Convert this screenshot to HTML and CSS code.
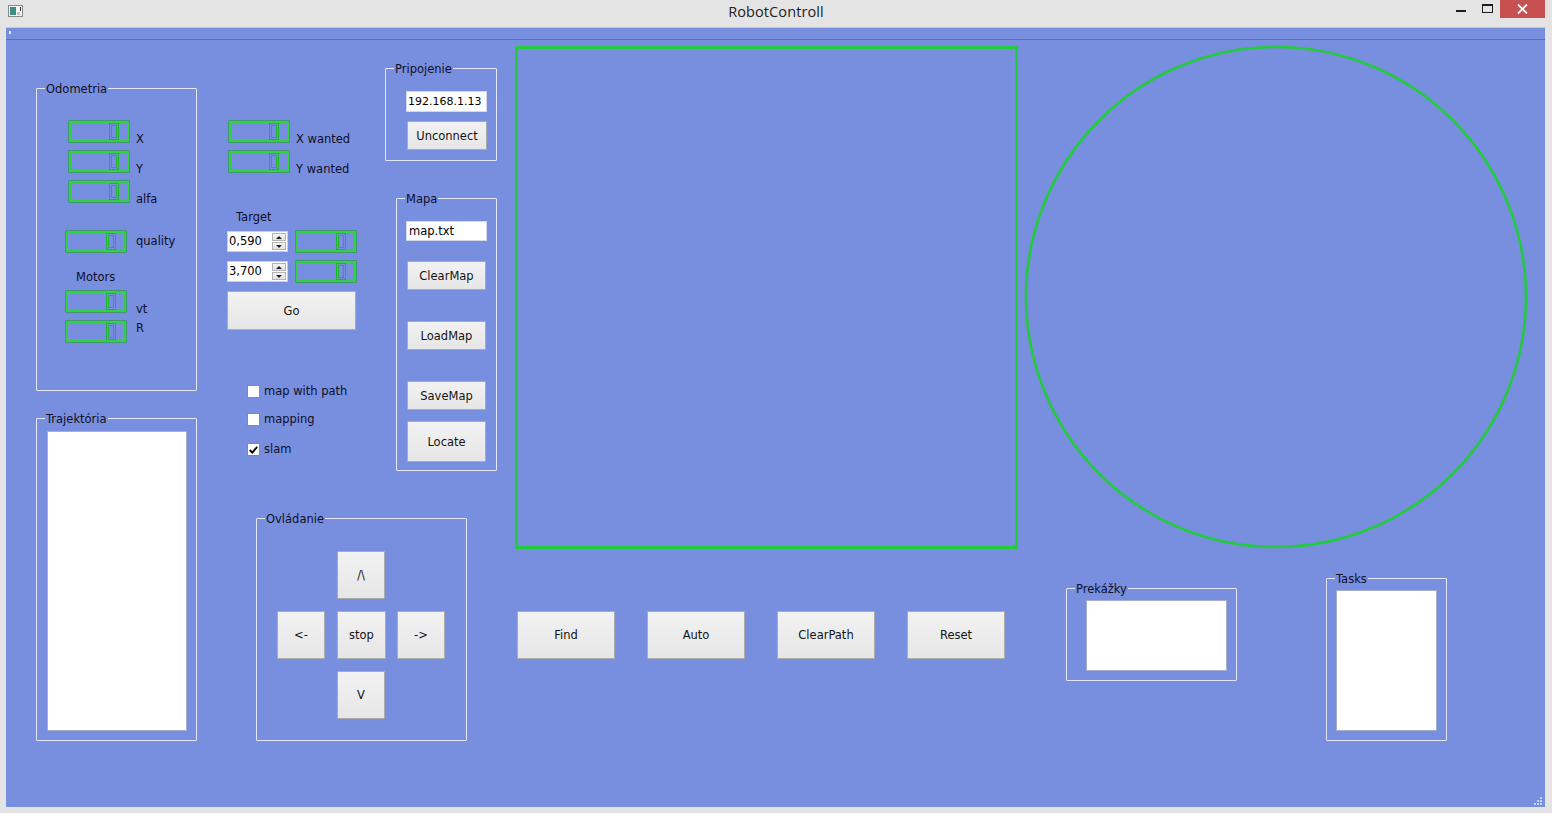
FILE: index.html
```html
<!DOCTYPE html>
<html lang="sk">
<head>
<meta charset="utf-8">
<title>RobotControll</title>
<link rel="stylesheet" href="styles.css">
</head>
<body>
<div class="window">
  <header class="titlebar">
    <svg class="app-icon" width="15" height="12" viewBox="0 0 15 12">
      <rect x="0.5" y="0.5" width="14" height="11" fill="#f4f4f4" stroke="#8a8a8a"/>
      <rect x="2" y="2" width="6" height="8" fill="#3d8f86"/>
      <rect x="9" y="7" width="3" height="3" fill="#c9c0b0"/>
      <rect x="12" y="2" width="1" height="4" fill="#333"/>
    </svg>
    <div class="title">RobotControll</div>
    <div class="controls">
      <span class="ctl-min"></span>
      <span class="ctl-max"></span>
      <span class="ctl-close">
        <svg width="11" height="10" viewBox="0 0 11 10"><path d="M1 0.5 L10 9.5 M10 0.5 L1 9.5" stroke="#fff" stroke-width="1.8"/></svg>
      </span>
    </div>
  </header>

  <main class="client">
    <div class="toolbar"><span class="handle"></span></div>

    <div class="form">
      <!-- Odometria -->
      <section class="group g-odo">
        <span class="gtitle">Odometria</span>
        <div class="row r-x"><div class="lcd"><svg class="digit" width="10" height="17" viewBox="0 0 10 17"><rect x="0.5" y="0.5" width="9" height="16"/><rect x="2.5" y="2.5" width="5" height="12"/></svg></div><span class="lbl lbl-low">X</span></div>
        <div class="row r-y"><div class="lcd"><svg class="digit" width="10" height="17" viewBox="0 0 10 17"><rect x="0.5" y="0.5" width="9" height="16"/><rect x="2.5" y="2.5" width="5" height="12"/></svg></div><span class="lbl lbl-low">Y</span></div>
        <div class="row r-y"><div class="lcd"><svg class="digit" width="10" height="17" viewBox="0 0 10 17"><rect x="0.5" y="0.5" width="9" height="16"/><rect x="2.5" y="2.5" width="5" height="12"/></svg></div><span class="lbl lbl-low">alfa</span></div>
        <div class="row r-q"><div class="lcd"><svg class="digit" width="10" height="17" viewBox="0 0 10 17"><rect x="0.5" y="0.5" width="9" height="16"/><rect x="2.5" y="2.5" width="5" height="12"/></svg></div><span class="lbl lbl-mid lbl-w">quality</span></div>
        <span class="lbl motors">Motors</span>
        <div class="row r-vt"><div class="lcd"><svg class="digit" width="10" height="17" viewBox="0 0 10 17"><rect x="0.5" y="0.5" width="9" height="16"/><rect x="2.5" y="2.5" width="5" height="12"/></svg></div><span class="lbl lbl-low lbl-w">vt</span></div>
        <div class="row r-r"><div class="lcd"><svg class="digit" width="10" height="17" viewBox="0 0 10 17"><rect x="0.5" y="0.5" width="9" height="16"/><rect x="2.5" y="2.5" width="5" height="12"/></svg></div><span class="lbl lbl-top lbl-w">R</span></div>
      </section>

      <!-- Trajektoria -->
      <section class="group g-traj">
        <span class="gtitle">Trajektória</span>
        <div class="listbox lb-traj"></div>
      </section>

      <!-- middle column -->
      <div class="midcol">
        <div class="row r-w"><div class="lcd"><svg class="digit" width="10" height="17" viewBox="0 0 10 17"><rect x="0.5" y="0.5" width="9" height="16"/><rect x="2.5" y="2.5" width="5" height="12"/></svg></div><span class="lbl lbl-low">X wanted</span></div>
        <div class="row r-w r-y"><div class="lcd"><svg class="digit" width="10" height="17" viewBox="0 0 10 17"><rect x="0.5" y="0.5" width="9" height="16"/><rect x="2.5" y="2.5" width="5" height="12"/></svg></div><span class="lbl lbl-low">Y wanted</span></div>
        <span class="lbl target">Target</span>
        <div class="row r-spin">
          <div class="spin"><span class="spin-val">0,590</span><span class="spin-btns"><span class="sb up"></span><span class="sb down"></span></span></div>
          <div class="lcd lcd-spin"><svg class="digit" width="10" height="17" viewBox="0 0 10 17"><rect x="0.5" y="0.5" width="9" height="16"/><rect x="2.5" y="2.5" width="5" height="12"/></svg></div>
        </div>
        <div class="row r-spin r-spin2">
          <div class="spin"><span class="spin-val">3,700</span><span class="spin-btns"><span class="sb up"></span><span class="sb down"></span></span></div>
          <div class="lcd lcd-spin"><svg class="digit" width="10" height="17" viewBox="0 0 10 17"><rect x="0.5" y="0.5" width="9" height="16"/><rect x="2.5" y="2.5" width="5" height="12"/></svg></div>
        </div>
        <button class="btn btn-go">Go</button>
        <div class="checks">
          <label class="chk"><span class="box"></span>map with path</label>
          <label class="chk chk2"><span class="box"></span>mapping</label>
          <label class="chk chk3"><span class="box checked"><svg width="9" height="8" viewBox="0 0 9 8"><path d="M0.8 4 L3.3 6.6 L8.2 0.9" fill="none" stroke="#000" stroke-width="1.9"/></svg></span>slam</label>
        </div>
      </div>

      <!-- Pripojenie -->
      <section class="group g-conn">
        <span class="gtitle">Pripojenie</span>
        <div class="edit edit-ip">192.168.1.13</div>
        <button class="btn btn-unconnect">Unconnect</button>
      </section>

      <!-- Mapa -->
      <section class="group g-map">
        <span class="gtitle">Mapa</span>
        <div class="edit edit-map">map.txt</div>
        <button class="btn btn-map b-clear">ClearMap</button>
        <button class="btn btn-map b-load">LoadMap</button>
        <button class="btn btn-map b-save">SaveMap</button>
        <button class="btn btn-map b-locate">Locate</button>
      </section>

      <!-- map canvas -->
      <div class="mapframe"></div>
      <svg class="radar" width="506" height="506" viewBox="0 0 506 506">
        <circle cx="253" cy="253" r="250" fill="none" stroke="#22cc3c" stroke-width="2.6"/>
      </svg>

      <!-- Ovladanie -->
      <section class="group g-ctrl">
        <span class="gtitle">Ovládanie</span>
        <div class="pad">
          <button class="btn pbtn p-up">/\</button>
          <button class="btn pbtn p-left">&lt;-</button>
          <button class="btn pbtn p-stop">stop</button>
          <button class="btn pbtn p-right">-&gt;</button>
          <button class="btn pbtn p-down">V</button>
        </div>
      </section>

      <!-- action buttons -->
      <div class="actions">
        <button class="btn abtn">Find</button>
        <button class="btn abtn">Auto</button>
        <button class="btn abtn">ClearPath</button>
        <button class="btn abtn">Reset</button>
      </div>

      <!-- Prekazky -->
      <section class="group g-obst">
        <span class="gtitle">Prekážky</span>
        <div class="listbox lb-obst"></div>
      </section>

      <!-- Tasks -->
      <section class="group g-tasks">
        <span class="gtitle">Tasks</span>
        <div class="listbox lb-tasks"></div>
      </section>
    </div>

    <svg class="grip" width="10" height="10" viewBox="0 0 10 10">
      <rect x="7" y="1" width="2" height="2" fill="#c9d0f0"/>
      <rect x="4" y="4" width="2" height="2" fill="#c9d0f0"/>
      <rect x="7" y="4" width="2" height="2" fill="#c9d0f0"/>
      <rect x="1" y="7" width="2" height="2" fill="#c9d0f0"/>
      <rect x="4" y="7" width="2" height="2" fill="#c9d0f0"/>
      <rect x="7" y="7" width="2" height="2" fill="#c9d0f0"/>
    </svg>
  </main>
</div>
</body>
</html>
```

FILE: styles.css
```css
* { box-sizing: border-box; }

html, body {
  margin: 0;
  padding: 0;
  background: #e4e4e4;
}

body {
  font-family: "DejaVu Sans", "Liberation Sans", sans-serif;
  font-size: 11.5px;
  color: #0e1028;
}

.window {
  width: 1552px;
  height: 813px;
  display: flex;
  flex-direction: column;
  background: #e4e4e4;
  overflow: hidden;
}

/* ---------- title bar ---------- */
.titlebar {
  height: 27px;
  flex: none;
  display: grid;
  grid-template-columns: 1fr auto 1fr;
  align-items: start;
}

.app-icon {
  margin: 5px 0 0 8px;
  display: block;
}

.title {
  font-family: "Open Sans", "Noto Sans", sans-serif;
  font-size: 14.5px;
  line-height: 24px;
  color: #222;
  letter-spacing: 0.1px;
}

.controls {
  justify-self: end;
  display: flex;
  align-items: flex-start;
  margin-right: 7px;
}

.ctl-min {
  width: 10px;
  height: 2px;
  margin-top: 10px;
  margin-right: 16px;
  background: #1c1c1c;
}

.ctl-max {
  width: 11px;
  height: 9px;
  margin-top: 4px;
  margin-right: 7px;
  border: 1px solid #1c1c1c;
  border-top-width: 2px;
}

.ctl-close {
  width: 45px;
  height: 18px;
  background: #c75050;
  display: flex;
  align-items: center;
  justify-content: center;
}

.ctl-close svg { display: block; }

/* ---------- client area ---------- */
.client {
  position: relative;
  flex: none;
  height: 780px;
  margin: 0 7px 0 6px;
  border-top: 1px solid #c5c9d6;
  background: #788ede;
  display: flex;
  flex-direction: column;
}

.toolbar {
  height: 12px;
  flex: none;
  border-bottom: 1px solid #5a6cc4;
  padding: 3px 0 0 3px;
}

.handle {
  display: block;
  width: 2px;
  height: 3px;
  background: #e8ecff;
}

.form {
  position: relative;
  flex: 1;
}

.grip {
  position: absolute;
  right: 2px;
  bottom: 1px;
}

/* ---------- common widgets ---------- */
.lbl {
  display: block;
  line-height: 14px;
  white-space: nowrap;
}

.row {
  display: flex;
  align-items: flex-start;
  height: 21px;
}

.row .lbl { margin-left: 7px; }
.row .lbl-w { margin-left: 10px; }
.lbl-low { padding-top: 11px; }
.lbl-mid { padding-top: 3px; }
.lbl-top { padding-top: 0; }

.lcd {
  width: 60px;
  height: 21px;
  flex: none;
  border: 2px solid #33d244;
  box-shadow: 0 0 0 0.6px #1f9a31;
  display: flex;
  justify-content: flex-end;
  align-items: flex-start;
  padding: 0 8px 0 0;
}

.digit {
  flex: none;
  display: block;
}

.digit rect {
  fill: none;
  stroke: #1fb533;
  stroke-width: 1;
}

.btn {
  font-family: "DejaVu Sans", "Liberation Sans", sans-serif;
  font-size: 11.5px;
  color: #141414;
  padding: 0;
  margin: 0;
  display: flex;
  align-items: center;
  justify-content: center;
  border: 1px solid #acacac;
  border-radius: 0;
  background: linear-gradient(#f2f2f2, #e6e6e6);
}

.edit {
  background: #fff;
  border: 1px solid #d4d9ea;
  line-height: 17px;
  padding-left: 1px;
  color: #000;
  white-space: nowrap;
  overflow: hidden;
}

.listbox {
  background: #fff;
  border: 1px solid #a5add0;
}

/* ---------- group boxes ---------- */
.group {
  position: absolute;
  border: 1px solid #e3e7f7;
  border-radius: 1px;
}

.gtitle {
  position: absolute;
  top: -7px;
  left: 8px;
  padding: 0 1px;
  background: #788ede;
  line-height: 14px;
  font-size: 11.5px;
  white-space: nowrap;
}

/* Odometria */
.g-odo {
  left: 30px;
  top: 48px;
  width: 161px;
  height: 303px;
  padding: 32px 0 0 32px;
}

.g-odo .r-y { margin-top: 9px; }
.g-odo .r-q { margin-top: 29px; margin-left: -3px; }
.g-odo .motors { margin-top: 18px; margin-left: 7px; }
.g-odo .r-vt { margin-top: 7px; margin-left: -3px; }
.g-odo .r-r { margin-top: 9px; margin-left: -3px; }

/* Trajektoria */
.g-traj {
  left: 30px;
  top: 378px;
  width: 161px;
  height: 323px;
  padding: 12px 0 0 10px;
}

.lb-traj { width: 140px; height: 300px; }

/* middle column */
.midcol {
  position: absolute;
  left: 221px;
  top: 81px;
  display: flex;
  flex-direction: column;
  align-items: flex-start;
}

.r-w { margin-left: 2px; }
.midcol .r-y { margin-top: 9px; }
.target { margin: 38px 0 0 9px; }
.r-spin { margin-top: 7px; }
.r-spin2 { margin-top: 9px; }
.lcd-spin { margin-left: 8px; }

.spin {
  width: 61px;
  height: 21px;
  background: #fff;
  border: 1px solid #c9cde0;
  display: flex;
  justify-content: space-between;
  color: #000;
}

.spin-val {
  line-height: 19px;
  padding-left: 1px;
}

.spin-btns {
  width: 15px;
  display: flex;
  flex-direction: column;
  gap: 1px;
  padding: 1px 1px 1px 0;
}

.sb {
  flex: 1;
  background: linear-gradient(#f4f4f4, #e2e2e2);
  border: 1px solid #b4b4b4;
  position: relative;
}

.sb::after {
  content: "";
  position: absolute;
  left: 3px;
  top: 2px;
  border-left: 3px solid transparent;
  border-right: 3px solid transparent;
}

.sb.up::after { border-bottom: 3px solid #222; }
.sb.down::after { border-top: 3px solid #222; }

.btn-go {
  width: 129px;
  height: 39px;
  margin-top: 9px;
}

.checks {
  margin: 55px 0 0 20px;
  display: flex;
  flex-direction: column;
}

.chk {
  display: flex;
  align-items: center;
  height: 13px;
  line-height: 13px;
  white-space: nowrap;
}

.chk2 { margin-top: 15px; }
.chk3 { margin-top: 17px; }

.box {
  width: 13px;
  height: 13px;
  margin-right: 4px;
  background: #fff;
  border: 1px solid #8a8a8a;
  display: flex;
  align-items: center;
  justify-content: center;
}

.box svg { display: block; }

/* Pripojenie */
.g-conn {
  left: 379px;
  top: 28px;
  width: 112px;
  height: 93px;
  padding: 22px 0 0 20px;
}

.edit-ip { width: 81px; height: 21px; line-height: 19px; font-size: 11px; }

.btn-unconnect {
  width: 80px;
  height: 29px;
  margin: 9px 0 0 1px;
}

/* Mapa */
.g-map {
  left: 390px;
  top: 158px;
  width: 101px;
  height: 273px;
  padding: 22px 0 0 9px;
}

.edit-map { width: 81px; height: 20px; line-height: 18px; padding-left: 2px; }

.btn-map {
  width: 79px;
  height: 29px;
  margin-left: 1px;
}

.b-clear { margin-top: 20px; }
.b-load { margin-top: 31px; }
.b-save { margin-top: 31px; }
.b-locate { margin-top: 11px; height: 41px; }

/* map canvas */
.mapframe {
  position: absolute;
  left: 509px;
  top: 6px;
  width: 503px;
  height: 503px;
  border: 3px solid #22cc3c;
}

.radar {
  position: absolute;
  left: 1017px;
  top: 4px;
}

/* Ovladanie */
.g-ctrl {
  left: 250px;
  top: 478px;
  width: 211px;
  height: 223px;
  padding: 32px 0 0 20px;
}

.pad {
  display: grid;
  grid-template-columns: 48px 48px 48px;
  grid-template-rows: 48px 48px 48px;
  gap: 12px;
}

.pbtn { width: 48px; height: 48px; }
.p-up { grid-column: 2; grid-row: 1; }
.p-left { grid-column: 1; grid-row: 2; }
.p-stop { grid-column: 2; grid-row: 2; width: 49px; }
.p-right { grid-column: 3; grid-row: 2; }
.p-down { grid-column: 2; grid-row: 3; }

/* action buttons */
.actions {
  position: absolute;
  left: 511px;
  top: 571px;
  display: flex;
  gap: 32px;
}

.abtn { width: 98px; height: 48px; }

/* Prekazky */
.g-obst {
  left: 1060px;
  top: 548px;
  width: 171px;
  height: 93px;
  padding: 11px 0 0 19px;
}

.lb-obst { width: 141px; height: 71px; }

/* Tasks */
.g-tasks {
  left: 1320px;
  top: 538px;
  width: 121px;
  height: 163px;
  padding: 11px 0 0 9px;
}

.lb-tasks { width: 101px; height: 141px; }
```
